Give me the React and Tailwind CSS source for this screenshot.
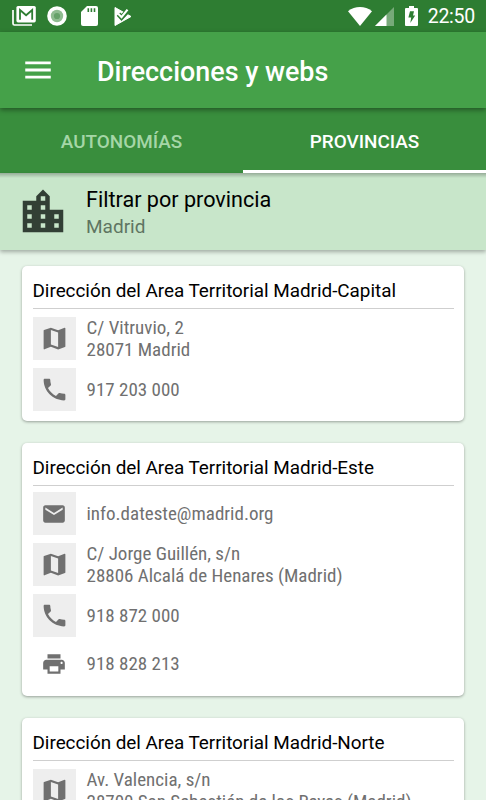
import { MdMap, MdPhone, MdEmail, MdPrint, MdMenu, MdLocationCity } from "react-icons/md";

const icons = {
  map: <MdMap className="size-[29px]" />,
  phone: <MdPhone className="size-[29px]" />,
  email: <MdEmail className="size-[26px]" />,
  print: <MdPrint className="size-[26px]" />,
};

const offices = [
  {
    title: "Dirección del Area Territorial Madrid-Capital",
    className: "h-[155px]",
    rowsClass: "pt-2",
    rows: [
      { type: "map", lines: ["C/ Vitruvio, 2", "28071 Madrid"] },
      { type: "phone", lines: ["917 203 000"] },
    ],
  },
  {
    title: "Dirección del Area Territorial Madrid-Este",
    className: "h-[253px]",
    rowsClass: "pt-1.5",
    rows: [
      { type: "email", lines: ["info.dateste@madrid.org"] },
      { type: "map", lines: ["C/ Jorge Guillén, s/n", "28806 Alcalá de Henares (Madrid)"] },
      { type: "phone", lines: ["918 872 000"] },
      { type: "print", lines: ["918 828 213"] },
    ],
  },
  {
    title: "Dirección del Area Territorial Madrid-Norte",
    className: "h-[155px]",
    rowsClass: "pt-2",
    rows: [
      { type: "map", lines: ["Av. Valencia, s/n", "28700 San Sebastián de los Reyes (Madrid)"] },
      { type: "phone", lines: ["917 202 500"] },
    ],
  },
];

function StatusBar() {
  return (
    <div className="flex h-8 shrink-0 items-center bg-[#2e7d32] text-white">
      <svg className="ml-3 h-5 w-6" viewBox="0 0 24 20" fill="none">
        <path d="M1 4v13.5q0 1.5 1.5 1.5H20" stroke="currentColor" strokeWidth="1.7" />
        <rect x="4.4" y="0" width="19.4" height="16.4" rx="1.6" fill="currentColor" />
        <path d="M8 13.8V4l6.1 5.2L20.2 4v9.8" stroke="#2e7d32" strokeWidth="1.8" />
      </svg>
      <svg className="ml-[11px] size-5" viewBox="0 0 20 20">
        <circle cx="10" cy="10" r="9.8" fill="#fff" />
        <circle cx="10" cy="10" r="6.2" fill="#8fbc91" />
        <circle cx="10" cy="10" r="3.1" fill="#66a16a" />
      </svg>
      <svg className="ml-3.5 h-5 w-[17px]" viewBox="0 0 17 20">
        <path d="M6 0h9a2 2 0 0 1 2 2v16a2 2 0 0 1-2 2H2a2 2 0 0 1-2-2V6z" fill="currentColor" />
        <path d="M7.3 2.3v3.8M10.4 2.3v3.8M13.5 2.3v3.8" stroke="#2e7d32" strokeWidth="1.6" />
      </svg>
      <svg className="ml-4 h-[19px] w-[18px]" viewBox="0 0 18 19">
        <path d="M1 .5 17 9.5 1 18.5z" fill="currentColor" stroke="currentColor" strokeLinejoin="round" />
        <path d="m4.5 7.2 3 3.2L15 2.5" stroke="#2e7d32" strokeWidth="4.8" fill="none" />
        <path d="m4.2 6.8 3.3 3.4 6-7.6" stroke="currentColor" strokeWidth="2.2" fill="none" />
      </svg>
      <div className="flex-1" />
      <svg className="h-[19px] w-6" viewBox="0 0 24 19">
        <path d="M0 4.2C7-1.4 17-1.4 24 4.2L12 19z" fill="currentColor" />
      </svg>
      <svg className="ml-[3px] h-[19px] w-[19px]" viewBox="0 0 19 19">
        <path d="M19 0v19H0z" fill="currentColor" opacity=".35" />
        <path d="M11.5 7.5V19H0z" fill="currentColor" />
      </svg>
      <svg className="ml-[11px] h-5 w-[13px]" viewBox="0 0 13 20">
        <path d="M4 0h5v2h3q1 0 1 1v16q0 1-1 1H1q-1 0-1-1V3q0-1 1-1h3z" fill="currentColor" />
        <path d="M5 5.2h4L8 9.5h2.2L5.3 17l.9-5.6H3.4z" fill="#2e7d32" />
      </svg>
      <span className="mr-[11px] ml-[10px] pt-0.5 text-[19.5px] leading-8 tracking-[-0.25px]">22:50</span>
    </div>
  );
}

function Row({ type, lines }) {
  return (
    <div className={type === "print" ? "-mt-[3px] flex h-[43px] items-center" : "flex h-[43px] items-center"}>
      <div
        className={
          type === "print"
            ? "mr-[11px] flex size-[43px] shrink-0 items-center justify-center"
            : "mr-[11px] flex size-[43px] shrink-0 items-center justify-center bg-[#eeeeee]"
        }
      >
        {icons[type]}
      </div>
      <div className="pt-px text-[19px] leading-[22px] font-stretch-condensed whitespace-nowrap">
        {lines.map((line) => (
          <div key={line}>{line}</div>
        ))}
      </div>
    </div>
  );
}

function OfficeCard({ office }) {
  return (
    <div
      className={`shrink-0 rounded-[5px] bg-white px-[10.5px] shadow-[0_1px_3px_rgba(0,0,0,0.35)] ${office.className}`}
    >
      <h2 className="h-[43px] border-b border-[#cfcfcf] pt-[3px] text-[18.9px] leading-[43px] tracking-[-0.03px] whitespace-nowrap text-black">
        {office.title}
      </h2>
      <div className={`flex flex-col gap-2 text-[#707070] ${office.rowsClass}`}>
        {office.rows.map((row) => (
          <Row key={row.type} {...row} />
        ))}
      </div>
    </div>
  );
}

export default function App() {
  return (
    <div className="flex h-[800px] w-[486px] flex-col overflow-hidden bg-[#e6f4e8] font-['Roboto',sans-serif]">
      <div className="z-10 shrink-0">
        <StatusBar />
        <header className="relative flex h-[76px] items-center bg-[#45a149] text-white shadow-[0_2px_5px_rgba(0,0,0,0.4)]">
          <MdMenu className="ml-[21px] size-[34px]" />
          <h1 className="ml-[42px] pt-1 text-[26.9px] font-medium">Direcciones y webs</h1>
        </header>
        <nav className="grid h-[65px] grid-cols-2 bg-[#398e3d] text-center text-[18.9px] leading-[62px] font-medium">
          <div className="pt-[3px] text-[#a5d6a7]">AUTONOMÍAS</div>
          <div className="h-[65px] border-b-3 border-white pt-[3px] leading-[62px] text-white">PROVINCIAS</div>
        </nav>
        <div className="h-[77px] bg-[#c8e6ca] shadow-[0_2px_4px_rgba(0,0,0,0.3)]">
          <div className="flex h-full items-center bg-linear-to-b from-black/25 to-transparent to-[5px] pt-px">
            <MdLocationCity className="ml-4 size-[54px] text-[#323f35]" />
            <div className="ml-4 pt-px">
              <div className="text-[21.6px] leading-[28px] text-black">Filtrar por provincia</div>
              <div className="text-[19px] leading-[26px] text-[#5f7562]">Madrid</div>
            </div>
          </div>
        </div>
      </div>
      <main className="flex flex-1 flex-col gap-[22px] overflow-hidden px-[22px] pt-4">
        {offices.map((office) => (
          <OfficeCard key={office.title} office={office} />
        ))}
      </main>
    </div>
  );
}
